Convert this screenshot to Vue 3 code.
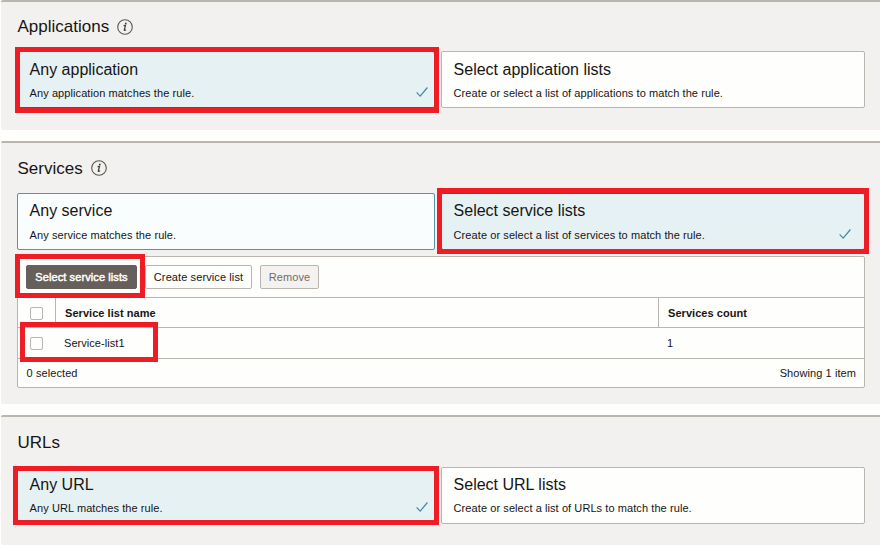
<script setup>
const sections = [
  {
    id: 'applications', title: 'Applications', info: true,
    cards: [
      { title: 'Any application', text: 'Any application matches the rule.', selected: true },
      { title: 'Select application lists', text: 'Create or select a list of applications to match the rule.' },
    ],
  },
  {
    id: 'services', title: 'Services', info: true, table: true,
    cards: [
      { title: 'Any service', text: 'Any service matches the rule.', hover: true },
      { title: 'Select service lists', text: 'Create or select a list of services to match the rule.', selected: true },
    ],
  },
  {
    id: 'urls', title: 'URLs',
    cards: [
      { title: 'Any URL', text: 'Any URL matches the rule.', selected: true },
      { title: 'Select URL lists', text: 'Create or select a list of URLs to match the rule.' },
    ],
  },
]
</script>

<template>
  <main class="page">
    <section v-for="s in sections" :key="s.id" class="section" :class="s.id">
      <header class="heading">
        <h2>{{ s.title }}</h2>
        <svg v-if="s.info" class="info" viewBox="0 0 16 16" width="16" height="16">
          <circle cx="8" cy="8" r="7.3" />
          <path class="stem" d="M6.6 6.6 8.5 6.3 7.3 11Q7.2 11.8 9 10.8" />
          <circle class="dot" cx="8.8" cy="4.4" r=".9" />
        </svg>
      </header>
      <div class="cards">
        <div v-for="c in s.cards" :key="c.title" class="card" :class="{ selected: c.selected, hover: c.hover }">
          <h3>{{ c.title }}</h3>
          <p>{{ c.text }}</p>
          <svg v-if="c.selected" class="check" viewBox="0 0 12 10" width="12" height="10">
            <path d="M.6 5.4 4.2 9.1 11.4.5" />
          </svg>
        </div>
      </div>
      <div v-if="s.table" class="table">
        <div class="toolbar">
          <button class="primary">Select service lists</button>
          <button class="create">Create service list</button>
          <button class="remove" disabled>Remove</button>
        </div>
        <div class="row head">
          <div class="pick"><span class="box"></span></div>
          <div class="name">Service list name</div>
          <div class="count">Services count</div>
        </div>
        <div class="row item">
          <div class="pick"><span class="box"></span></div>
          <div class="name">Service-list1</div>
          <div class="count">1</div>
        </div>
        <div class="footer"><span>0 selected</span><span>Showing 1 item</span></div>
      </div>
    </section>
    <i class="mark mark-any-app"></i>
    <i class="mark mark-service-lists"></i>
    <i class="mark mark-button"></i>
    <i class="mark mark-row"></i>
    <i class="mark mark-any-url"></i>
  </main>
</template>

<style>
body { background: #fefefc; overflow: hidden; }
</style>

<style scoped>
* { box-sizing: border-box; margin: 0; }
.page {
  position: relative; display: flex; flex-direction: column; gap: 11px;
  width: 880px; height: 545px; padding-left: 1px; overflow: hidden;
  font: 11px/14px "Liberation Sans", Arial, sans-serif; color: #161513;
}
.section {
  flex: none; height: 130px; padding: 0 15px 0 16px;
  border-top: 2px solid #bab5ae; border-radius: 2px 0 0 2px; background: #f3f1f0;
}
.services { height: 263px; }
.heading { display: flex; align-items: center; gap: 8px; height: 49px; padding-left: .5px; }
.services .heading, .urls .heading { height: 50px; }
.services h2, .urls h2 { padding-top: 2px; }
h2 { font-size: 17px; line-height: 20px; font-weight: 400; }
.info { fill: none; stroke: #5a5652; stroke-width: 1.1; }
.info .stem { stroke: #45413d; stroke-width: 1.3; }
.info .dot { fill: #45413d; stroke: none; }
.cards { display: grid; grid-template-columns: 418px 424px; gap: 6px; }
.card {
  position: relative; height: 57px; padding: 8px 11px 0 11.6px;
  border: 1px solid #bab5ae; border-radius: 2px; background: #fefefc;
}
.selected { border-color: #1f6680; background: #e6f1f4; }
.hover { border-color: #5f91a5; background: #f9fdfe; }
h3 { font-size: 16px; line-height: 19px; font-weight: 400; }
.card p { margin-top: 7px; letter-spacing: .08px; }
.services .card, .urls .card { padding-top: 7px; }
.services .card p { margin-top: 8px; }
.check { position: absolute; right: 6px; bottom: 10px; fill: none; stroke: #3f8aa3; stroke-width: 1.2; }
.services .check { right: 13px; }
.urls .check { bottom: 11px; }
.table { height: 132px; margin-top: 6px; border: 1px solid #bab5ae; border-radius: 2px; background: #fefefc; }
.toolbar { display: flex; gap: 8px; height: 40px; padding: 8px 8px 0; }
button {
  height: 24px; padding: 0; border: 1px solid #bab5ae; border-radius: 2px; background: #fefefc;
  color: #161513; font: 11px/14px "Liberation Sans", Arial, sans-serif; letter-spacing: .1px; white-space: nowrap;
}
.primary { width: 111px; border-color: #665f5b; background: #665f5b; color: #fff; -webkit-text-stroke: .45px #fff; }
.create { width: 107px; }
.remove { width: 59px; background: #f4f2f1; color: #706b67; }
.row { display: grid; grid-template-columns: 37px 603px 1fr; height: 30px; line-height: 30px; border-top: 1px solid #bab5ae; }
.item { height: 31px; }
.pick { display: flex; align-items: center; padding-left: 12px; }
.box { width: 13px; height: 13px; border: 1px solid #bab5ae; border-radius: 2px; background: #fefefc; }
.head { font-weight: 700; }
.head .name, .head .count { border-left: 1px solid #bab5ae; }
.name, .count { padding-left: 9px; letter-spacing: .05px; }
.footer {
  display: flex; justify-content: space-between; height: 29px; padding: 0 8px 0 8.6px;
  border-top: 1px solid #bab5ae; line-height: 28px; letter-spacing: .08px;
}
.mark { position: absolute; border: 5px solid #ee1c25; pointer-events: none; }
.mark-any-app { left: 15px; top: 47px; width: 424px; height: 66px; }
.mark-service-lists { left: 437px; top: 188px; width: 432px; height: 66px; }
.mark-button { left: 15px; top: 254px; width: 130px; height: 44px; }
.mark-row { left: 20px; top: 322px; width: 138px; height: 40px; }
.mark-any-url { left: 13px; top: 466px; width: 426px; height: 59px; }
</style>
